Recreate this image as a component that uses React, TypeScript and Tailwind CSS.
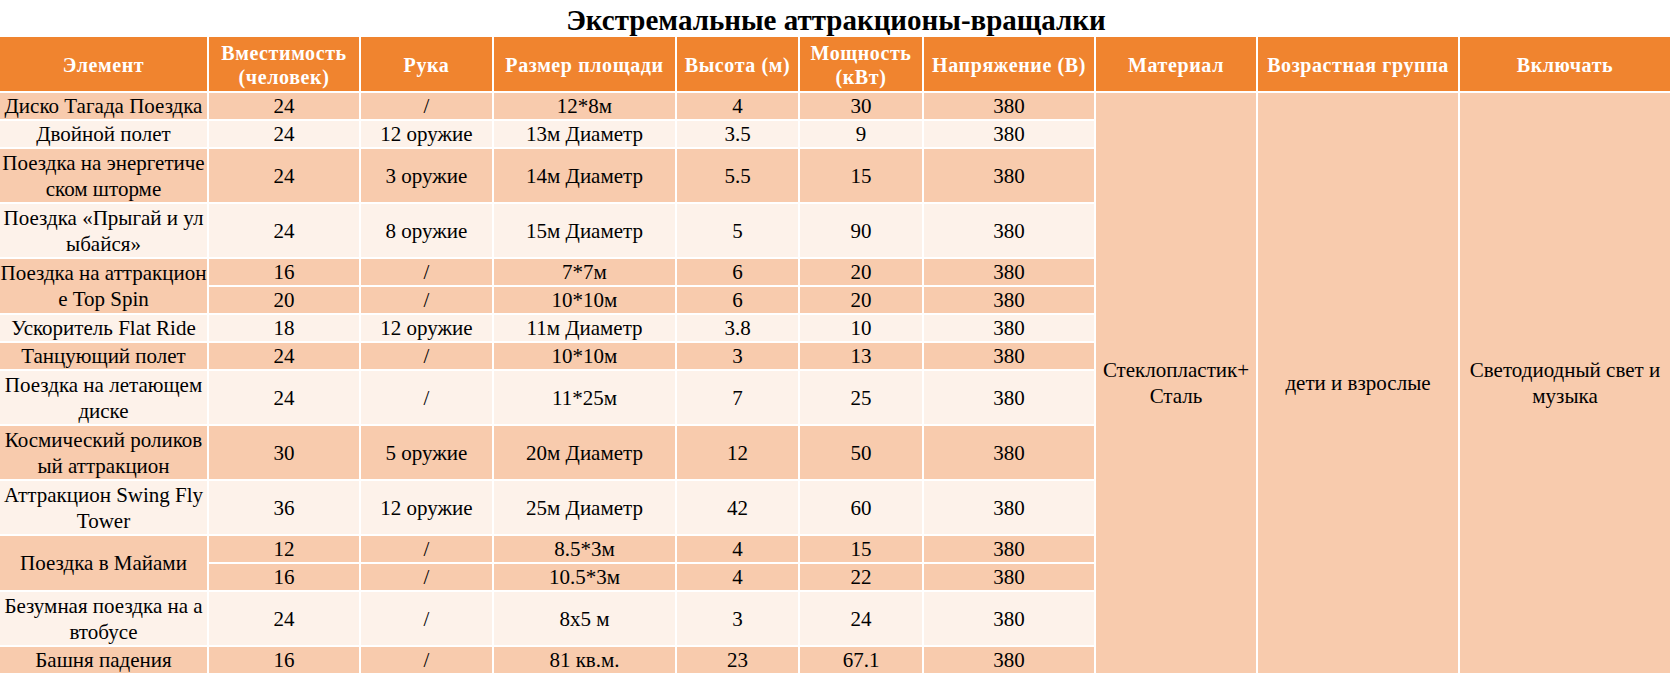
import React from "react";

type Group = {
    dark: boolean;
    name: string[];
    rows: string[][];
    tall?: boolean;
};

const headers: string[][] = [
    ["Элемент"],
    ["Вместимость", "(человек)"],
    ["Рука"],
    ["Размер площади"],
    ["Высота (м)"],
    ["Мощность", "(кВт)"],
    ["Напряжение (В)"],
    ["Материал"],
    ["Возрастная группа"],
    ["Включать"],
];

const groups: Group[] = [
    { dark: true, name: ["Диско Тагада Поездка"], rows: [["24", "/", "12*8м", "4", "30", "380"]] },
    { dark: false, name: ["Двойной полет"], rows: [["24", "12 оружие", "13м Диаметр", "3.5", "9", "380"]] },
    { dark: true, tall: true, name: ["Поездка на энергетиче", "ском шторме"], rows: [["24", "3 оружие", "14м Диаметр", "5.5", "15", "380"]] },
    { dark: false, tall: true, name: ["Поездка «Прыгай и ул", "ыбайся»"], rows: [["24", "8 оружие", "15м Диаметр", "5", "90", "380"]] },
    {
        dark: true,
        name: ["Поездка на аттракцион", "е Top Spin"],
        rows: [
            ["16", "/", "7*7м", "6", "20", "380"],
            ["20", "/", "10*10м", "6", "20", "380"],
        ],
    },
    { dark: false, name: ["Ускоритель Flat Ride"], rows: [["18", "12 оружие", "11м Диаметр", "3.8", "10", "380"]] },
    { dark: true, name: ["Танцующий полет"], rows: [["24", "/", "10*10м", "3", "13", "380"]] },
    { dark: false, tall: true, name: ["Поездка на летающем", "диске"], rows: [["24", "/", "11*25м", "7", "25", "380"]] },
    { dark: true, tall: true, name: ["Космический роликов", "ый аттракцион"], rows: [["30", "5 оружие", "20м Диаметр", "12", "50", "380"]] },
    { dark: false, tall: true, name: ["Аттракцион Swing Fly", "Tower"], rows: [["36", "12 оружие", "25м Диаметр", "42", "60", "380"]] },
    {
        dark: true,
        name: ["Поездка в Майами"],
        rows: [
            ["12", "/", "8.5*3м", "4", "15", "380"],
            ["16", "/", "10.5*3м", "4", "22", "380"],
        ],
    },
    { dark: false, tall: true, name: ["Безумная поездка на а", "втобусе"], rows: [["24", "/", "8x5 м", "3", "24", "380"]] },
    { dark: true, name: ["Башня падения"], rows: [["16", "/", "81 кв.м.", "23", "67.1", "380"]] },
];

const Lines = ({ lines }: { lines: string[] }) => (
    <>
        {lines.map((l, i) => (
            <span key={i} className="block whitespace-nowrap">{l}</span>
        ))}
    </>
);

const Cell = ({ dark, span, children }: { dark: boolean; span?: boolean; children: React.ReactNode }) => (
    <div
        className={
            "flex flex-col items-center justify-center text-center leading-[26px] " +
            (span ? "row-span-2 " : "") +
            (dark ? "bg-[#f8cbad]" : "bg-[#fdf2ea]")
        }
    >
        {children}
    </div>
);

export default function App() {
    const body: React.ReactNode[] = [];
    groups.forEach((g, gi) => {
        g.rows.forEach((r, ri) => {
            if (ri === 0) {
                body.push(
                    <Cell key={`n${gi}`} dark={g.dark} span={g.rows.length > 1}>
                        <Lines lines={g.name} />
                    </Cell>
                );
            }
            r.forEach((v, ci) => {
                body.push(
                    <Cell key={`c${gi}-${ri}-${ci}`} dark={g.dark}>
                        {v}
                    </Cell>
                );
            });
            // merged columns sit beside the first data row and span all 15
            if (gi === 0 && ri === 0) {
                body.push(
                    <div key="mat" className="row-span-15 flex flex-col items-center justify-center bg-[#f8cbad] text-center leading-[26px]">
                        <span>Стеклопластик+</span>
                        <span>Сталь</span>
                    </div>,
                    <div key="age" className="row-span-15 flex items-center justify-center bg-[#f8cbad] text-center leading-[26px]">
                        дети и взрослые
                    </div>,
                    <div key="inc" className="row-span-15 flex flex-col items-center justify-center bg-[#f8cbad] text-center leading-[26px]">
                        <span>Светодиодный свет и</span>
                        <span>музыка</span>
                    </div>
                );
            }
        });
    });

    return (
        <div className="w-[1672px] h-[675px] bg-white font-['Liberation_Serif',serif] text-black overflow-hidden">
            <h1 className="h-[37px] flex items-center justify-center pt-[3px] text-[29px] font-bold leading-none">
                Экстремальные аттракционы-вращалки
            </h1>
            <div className="grid grid-cols-[207px_150px_131px_181px_121px_122px_170px_160px_200px_210px] grid-rows-[54px_26px_26px_53px_53px_26px_26px_26px_26px_53px_53px_53px_26px_26px_53px_26px] gap-[2px] text-[21px]">
                {headers.map((h, i) => (
                    <div key={i} className="flex flex-col items-center justify-center bg-[#f0842f] pt-[2px] text-center text-[20px] font-bold leading-[24px] tracking-[0.6px] text-white">
                        <Lines lines={h} />
                    </div>
                ))}
                {body}
            </div>
        </div>
    );
}
